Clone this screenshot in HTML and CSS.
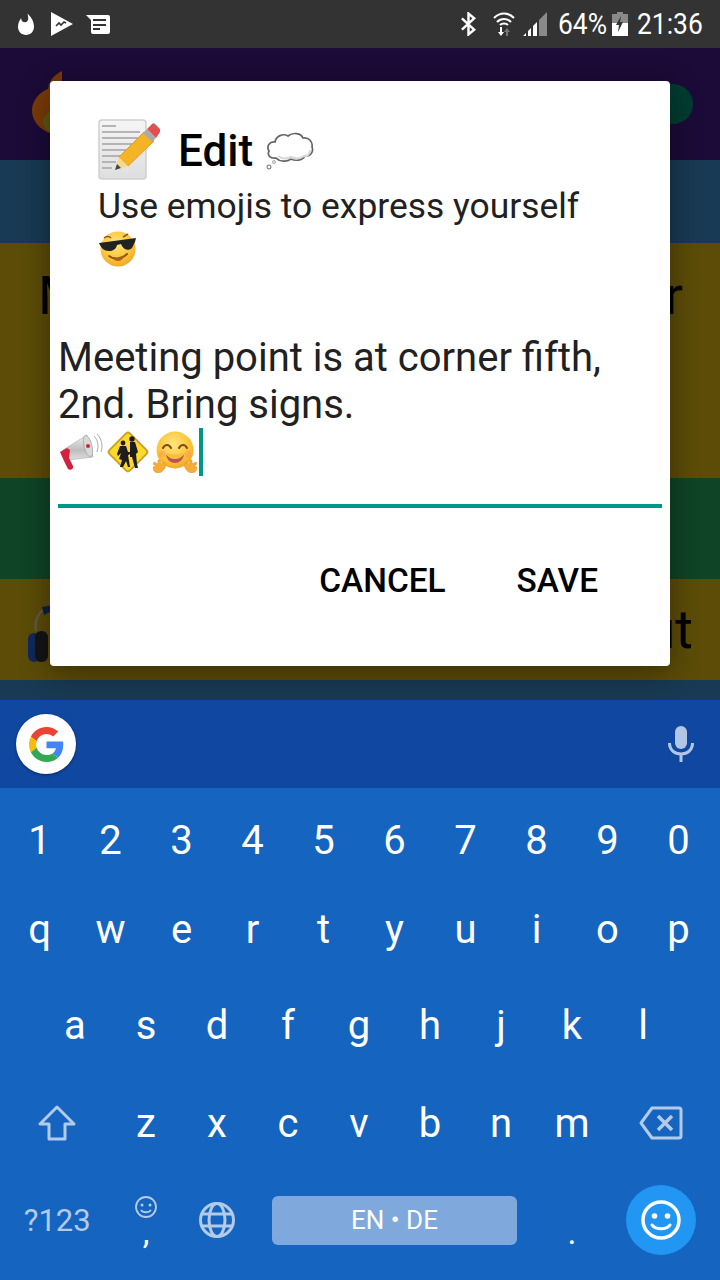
FILE: index.html
```html
<!DOCTYPE html>
<html lang="en">

<head>
    <meta charset="UTF-8">
    <title>Edit</title>
    <meta name="viewport" content="width=device-width, initial-scale=1.0">
    <link rel="stylesheet" href="styles.css">
</head>

<body>

    <div class="statusbar">
        <div class="status-left">
            <svg class="st-flame" viewBox="4 0 16 22"><path fill="#fff" d="M13.500.67s.74 2.650.74 4.800c0 2.060-1.350 3.730-3.410 3.730-2.070 0-3.630-1.670-3.630-3.730l.03-.36C5.210 7.510 4 10.620 4 14c0 4.420 3.580 8 8 8s8-3.580 8-8C20 8.610 17.410 3.800 13.500.67z"/></svg>
            <svg class="st-play" viewBox="0 0 22 24"><path fill="#fff" d="M0 0L22 12 0 24z"/><path fill="none" stroke="#333" stroke-width="1.600" d="M5 14l3-3 2 2 3-3 2 1"/></svg>
            <svg class="st-news" viewBox="0 0 24 20"><path fill="#fff" d="M0 1h22a2 2 0 0 1 2 2v15a2 2 0 0 1-2 2H7a2 2 0 0 1-2-2V6z"/><path fill="none" stroke="#333" stroke-width="2" d="M7 6h13M7 11h13M7 15h7"/></svg>
        </div>
        <div class="status-right">
            <svg class="st-bt" viewBox="0 0 18 24"><path fill="none" stroke="#fff" stroke-width="2.600" d="M2 6l13 12-6 5V1l6 5L2 18"/></svg>
            <svg class="st-wifi" viewBox="0 0 22 24"><g fill="none" stroke="#fff" stroke-width="2"><path d="M1 6c6-6 14-6 20 0"/><path d="M4 10c4-4 10-4 14 0"/><path d="M7 13c2-2 6-2 8 0"/></g><path fill="#fff" d="M7 15h2v5h2l-3 4-3-4h2z"/><path fill="#777" d="M14 16l3 4h-2v4h-2v-4h-2z"/></svg>
            <svg class="st-signal" viewBox="0 0 24 24"><path fill="#fff" d="M0 24l3-3v3zM5 24v-5l3-3v8zM10 24V14l4-4v14z"/><path fill="#8a8a8a" d="M16 24V8l8-8v24z"/></svg>
            <span class="st-text st-pct"><span>64%</span></span>
            <svg class="st-batt" viewBox="0 0 16 24"><path fill="#8a8a8a" d="M5 0h6v2h5v9H0V2h5z"/><path fill="#fff" d="M0 11h16v13H0z"/><path fill="#333" d="M9 4L4 13h3l-1 7 5-10H8z"/></svg>
            <span class="st-text st-time"><span>21:36</span></span>
        </div>
    </div>

    <div class="app">
        <div class="band band-head">
            <svg class="bg-flame" viewBox="0 0 32 66"><path fill="#7a3b07" d="M32 1C24 5 19 11 18 19 10 22 2 30 2 40c0 14 12 24 30 26z"/><path fill="#5c5a14" d="M32 38c-10 1-19 6-19 14 0 7 9 13 19 14z"/></svg>
            <div class="bg-fab"></div>
        </div>
        <div class="band band-blue"></div>
        <div class="band band-yellow band-tall"><span>M</span><span>r</span></div>
        <div class="band band-green"></div>
        <div class="band band-yellow band-last">
            <svg class="bg-phones" viewBox="0 0 24 58"><path fill="none" stroke="#5d5a48" stroke-width="2.500" d="M8 26C6 14 10 6 24 0"/><path fill="#0e1f44" d="M14 2l10-2v6l-8 4z"/><rect x="0" y="28" width="12" height="29" rx="6" fill="#10285c"/><rect x="7" y="26" width="13" height="31" rx="6" fill="#141414"/></svg>
            <span>ut</span>
        </div>
        <div class="band band-foot"></div>
    </div>

    <div class="dialog">
        <div class="dialog-title">
            <svg class="em-memo" viewBox="0 0 62 62">
                <defs>
                    <linearGradient id="paper" x1="0" y1="0" x2="0" y2="1"><stop offset="0" stop-color="#f5f5f5"/><stop offset="1" stop-color="#dedede"/></linearGradient>
                </defs>
                <rect x="1" y="1" width="47" height="59" rx="3" fill="url(#paper)" stroke="#cfcfcf" stroke-width="1.500"/>
                <path stroke="#b4b4b4" stroke-width="2" d="M4 7h14M4 13h38M4 19h38M4 25h30M4 31h24M4 37h20M4 43h14M4 49h10"/>
                <path fill="#f5b428" stroke="#e09b14" d="M46 13l10 9-26 25-9-9z"/>
                <path fill="#f6d98a" d="M21 38l9 9-13 4z"/>
                <path fill="#444" d="M19 45l4 4-6 2z"/>
                <path fill="#aaa" d="M45 14l4-4 9 9-4 4z"/>
                <path fill="#e0504f" d="M49 10l5-5c1-1 2-1 3 0l5 5c1 1 1 2 0 3l-4 6z"/>
            </svg>
            <span class="title-text">Edit</span>
            <svg class="em-bubble" viewBox="0 0 48 40">
                <path fill="#fff" stroke="#666" stroke-width="1.700" d="M10 27C4 28 1 24 3 20 0 15 4 10 9 11 10 5 17 2 22 5 27 1 35 2 37 7 43 6 47 11 46 16 48 21 44 26 39 25 36 30 29 30 25 28 21 31 14 31 10 27z"/>
                <path fill="none" stroke="#d8d8d8" stroke-width="2" d="M12 25c4 3 9 3 13 1 4 2 9 2 13-1 3 1 6-2 6-6"/>
                <circle cx="3" cy="36" r="2" fill="#fff" stroke="#666"/>
                <circle cx="8" cy="31" r="1.500" fill="#eee" stroke="#888" stroke-width=".7"/>
            </svg>
        </div>
        <div class="dialog-sub">Use emojis to express yourself</div>
        <svg class="em-cool" viewBox="0 0 38 38">
            <defs>
                <radialGradient id="face" cx=".45" cy=".35" r=".75"><stop offset="0" stop-color="#ffe680"/><stop offset=".6" stop-color="#fbc436"/><stop offset="1" stop-color="#ec9a22"/></radialGradient>
            </defs>
            <circle cx="19" cy="19" r="17.500" fill="url(#face)"/>
            <path fill="#222" d="M0 13l37-5-1 4-3 6c-3 3-8 2-10-2l-1-2-4 1c-1 4-4 6-8 6-5 0-8-3-10-8z"/>
            <path fill="none" stroke="#8a5a12" stroke-width="1.500" d="M5 8c2-2 5-2 7 0M24 7l5-3"/>
            <path fill="none" stroke="#8a4a12" stroke-width="1.800" stroke-linecap="round" d="M10 26c5 4 13 3 18-2"/>
            <path fill="#a8641c" d="M12 27c4 2 9 2 14-2-2 4-4 6-7 6-3 0-5-2-7-4z"/>
        </svg>

        <div class="dialog-input">
            <div>Meeting point is at corner fifth,<br>2nd. Bring signs.</div>
            <div class="emoji-line">
                <svg class="em-mega" viewBox="0 0 44 38">
                    <defs>
                        <linearGradient id="metal" x1="0" y1="0" x2="0" y2="1"><stop offset="0" stop-color="#f2f2f2"/><stop offset=".6" stop-color="#bdbdbd"/><stop offset="1" stop-color="#e0e0e0"/></linearGradient>
                    </defs>
                    <path fill="url(#metal)" stroke="#aaa" stroke-width=".6" d="M4 17L28 2l6 22-25 3c-3-1-6-6-5-10z"/>
                    <path fill="#d32240" d="M1 19l7-4 3 2-1 8 4 8c1 3-3 5-5 3L5 28z"/>
                    <ellipse cx="29" cy="13" rx="4" ry="11" fill="#d8d8d8" stroke="#999" stroke-width=".6" transform="rotate(-14 29 13)"/>
                    <circle cx="29" cy="13" r="2" fill="#d32240"/>
                    <path fill="none" stroke="#aaa" d="M35 3c4 4 5 10 3 16M38 1c5 5 6 12 4 18"/>
                </svg>
                <svg class="em-sign" viewBox="0 0 44 44">
                    <rect x="7.500" y="7.500" width="29" height="29" rx="3" fill="#fcd92a" stroke="#c8a024" stroke-width="1.800" transform="rotate(45 22 22)"/>
                    <g fill="#1d1d1d">
                        <circle cx="17" cy="13" r="2.400"/>
                        <path d="M14 16h6l2 6 3 0-2 3-1 0 1 6 1 6h-2l-2-6-3 6h-3l2-7-3-1 2-6-3 3-1-2z"/>
                        <circle cx="26" cy="9" r="2.700"/>
                        <path d="M22 12h7l3 10-2 2 1 10 1 4h-3l-3-11-2 0 0-15z"/>
                    </g>
                </svg>
                <svg class="em-hug" viewBox="0 0 44 42">
                    <circle cx="22" cy="19" r="18.500" fill="url(#face)"/>
                    <path fill="none" stroke="#7a4a12" stroke-width="2" stroke-linecap="round" d="M10 17c2-4 6-4 8 0M26 17c2-4 6-4 8 0"/>
                    <path fill="#c0505a" d="M13 24c6 2 12 2 18 0-1 5-5 8-9 8s-8-3-9-8z"/>
                    <path fill="#f5c03a" d="M13 22c6 2 12 2 18 0-1 4-5 6-9 6s-8-2-9-6z"/>
                    <circle cx="9" cy="23" r="3.500" fill="#f59b58" opacity=".5"/>
                    <circle cx="35" cy="23" r="3.500" fill="#f59b58" opacity=".5"/>
                    <path fill="#f6ad37" stroke="#e08e2a" stroke-width=".5" d="M0 36l3-1-3-2 1-2 4 2 0-4h2l1 4 3-2 2 3c-1 4-4 8-8 8-3 0-5-3-5-6zM44 36l-3-1 3-2-1-2-4 2 0-4h-2l-1 4-3-2-2 3c1 4 4 8 8 8 3 0 5-3 5-6z"/>
                </svg>
                <span class="cursor"></span>
            </div>
        </div>

        <div class="dialog-actions">
            <span>CANCEL</span>
            <span>SAVE</span>
        </div>
    </div>

    <div class="keyboard">
        <div class="kb-top">
            <div class="g-btn">
                <svg class="g-logo" viewBox="0 0 48 48">
                    <path fill="#EA4335" d="M24 9.500c3.540 0 6.710 1.220 9.210 3.600l6.850-6.850C35.900 2.380 30.470 0 24 0 14.620 0 6.510 5.380 2.560 13.220l7.980 6.190C12.430 13.720 17.740 9.500 24 9.500z"/>
                    <path fill="#4285F4" d="M46.980 24.550c0-1.570-.15-3.090-.38-4.550H24v9.020h12.940c-.58 2.960-2.260 5.480-4.780 7.180l7.730 6c4.510-4.180 7.090-10.360 7.090-17.650z"/>
                    <path fill="#FBBC05" d="M10.530 28.590c-.48-1.450-.76-2.990-.76-4.590s.27-3.140.76-4.590l-7.980-6.190C.92 16.460 0 20.120 0 24c0 3.880.92 7.540 2.560 10.780l7.970-6.190z"/>
                    <path fill="#34A853" d="M24 48c6.480 0 11.930-2.130 15.890-5.810l-7.730-6c-2.150 1.450-4.920 2.300-8.160 2.300-6.260 0-11.570-4.220-13.470-9.910l-7.980 6.190C6.510 42.620 14.620 48 24 48z"/>
                </svg>
            </div>
            <svg class="mic" viewBox="0 0 26 36"><rect x="7" y="0" width="12" height="23" rx="6" fill="#b3c6e6"/><path fill="none" stroke="#b3c6e6" stroke-width="3" d="M1.500 17c0 7 5 11 11.500 11s11.500-4 11.500-11M13 28v8"/></svg>
        </div>
        <div class="kb-keys">
            <div class="kb-row">
                <span class="key">1</span><span class="key">2</span><span class="key">3</span><span class="key">4</span><span class="key">5</span><span class="key">6</span><span class="key">7</span><span class="key">8</span><span class="key">9</span><span class="key">0</span>
            </div>
            <div class="kb-row">
                <span class="key">q</span><span class="key">w</span><span class="key">e</span><span class="key">r</span><span class="key">t</span><span class="key">y</span><span class="key">u</span><span class="key">i</span><span class="key">o</span><span class="key">p</span>
            </div>
            <div class="kb-row">
                <span class="key start-3">a</span><span class="key">s</span><span class="key">d</span><span class="key">f</span><span class="key">g</span><span class="key">h</span><span class="key">j</span><span class="key">k</span><span class="key">l</span>
            </div>
            <div class="kb-row">
                <span class="key wide">
                    <svg class="ic-shift" viewBox="0 0 38 36"><path fill="none" stroke="#b3cbe9" stroke-width="3" stroke-linejoin="round" d="M19 2L2 19h9v15h16V19h9z"/></svg>
                </span>
                <span class="key">z</span><span class="key">x</span><span class="key">c</span><span class="key">v</span><span class="key">b</span><span class="key">n</span><span class="key">m</span>
                <span class="key wide">
                    <svg class="ic-del" viewBox="0 0 44 34"><path fill="none" stroke="#b3cbe9" stroke-width="3" stroke-linejoin="round" d="M13 2h27a2 2 0 0 1 2 2v26a2 2 0 0 1-2 2H13L2 17z"/><path stroke="#b3cbe9" stroke-width="3.500" d="M19 10l14 14M33 10L19 24"/></svg>
                </span>
            </div>
            <div class="kb-row">
                <span class="key wide fn-text">?123</span>
                <span class="key comma">
                    <svg class="ic-smile-sm" viewBox="0 0 24 24"><circle cx="12" cy="12" r="10" fill="none" stroke="#b3cbe9" stroke-width="1.800"/><circle cx="8" cy="10" r="1.500" fill="#b3cbe9"/><circle cx="16" cy="10" r="1.500" fill="#b3cbe9"/><path fill="none" stroke="#b3cbe9" stroke-width="1.800" d="M7 15c2 3 8 3 10 0"/></svg>
                    <span class="comma-mark">,</span>
                </span>
                <span class="key">
                    <svg class="ic-globe" viewBox="0 0 36 36"><g fill="none" stroke="#b3cbe9" stroke-width="3"><circle cx="18" cy="18" r="16.500"/><ellipse cx="18" cy="18" rx="8" ry="16.500"/><path d="M3 12h30M3 24h30"/></g></svg>
                </span>
                <span class="key space-key"><span class="space-bar">EN • DE</span></span>
                <span class="key dot">.</span>
                <span class="key wide">
                    <span class="emoji-btn">
                        <svg class="ic-smile" viewBox="0 0 40 40"><circle cx="20" cy="20" r="18" fill="none" stroke="#fff" stroke-width="3.500"/><circle cx="13.500" cy="16" r="2.800" fill="#fff"/><circle cx="26.500" cy="16" r="2.800" fill="#fff"/><path fill="none" stroke="#fff" stroke-width="3" stroke-linecap="round" d="M11 25c4 5 14 5 18 0"/></svg>
                    </span>
                </span>
            </div>
        </div>
    </div>

</body>

</html>
```

FILE: styles.css
```css
* {
    box-sizing: border-box;
}

body {
    margin: 0;
    width: 720px;
    height: 1280px;
    overflow: hidden;
    position: relative;
    font-family: Roboto, "Noto Sans", sans-serif;
    background: #1565c0;
}

svg {
    display: block;
}

/* status bar */
.statusbar {
    height: 48px;
    background: #333;
    display: flex;
    justify-content: space-between;
    align-items: center;
    padding: 0 17px 0 18px;
}

.status-left,
.status-right {
    display: flex;
    align-items: center;
}

.st-flame {
    width: 16px;
    height: 22px;
    margin-right: 17px;
}

.st-play {
    width: 22px;
    height: 24px;
    margin-right: 13px;
}

.st-news {
    width: 24px;
    height: 20px;
}

.st-bt {
    width: 17px;
    height: 24px;
    margin-right: 16px;
}

.st-wifi {
    width: 22px;
    height: 24px;
    margin-right: 8px;
}

.st-signal {
    width: 24px;
    height: 24px;
    margin-right: 11px;
}

.st-batt {
    width: 16px;
    height: 24px;
    margin: 0 9px 0 7px;
}

/* the status digits are narrower than Roboto's */
.st-text {
    color: #fff;
    font-size: 30px;
    line-height: 48px;
    white-space: nowrap;
}

.st-text span {
    display: inline-block;
    transform: scaleX(0.88);
    transform-origin: left center;
}

.st-pct {
    width: 47px;
}

.st-time {
    width: 66px;
}

/* dimmed app behind the dialog */
.app {
    height: 652px;
    display: flex;
    flex-direction: column;
}

.band {
    position: relative;
    display: flex;
    justify-content: space-between;
    align-items: center;
    color: #000;
    font-size: 54px;
}

.band-head {
    height: 112px;
    background: #1c0a38;
}

.band-blue {
    height: 83px;
    background: #183a54;
}

.band-yellow {
    background: #5c4c08;
    padding: 0 27px 0 38px;
}

.band-tall {
    height: 235px;
    align-items: flex-start;
    padding-top: 21px;
    padding-right: 37px;
}

.band-green {
    height: 101px;
    background: #0f4426;
}

.band-last {
    height: 101px;
    padding-left: 28px;
}

.band-foot {
    height: 20px;
    background: #183a54;
}

.bg-flame {
    position: absolute;
    left: 30px;
    top: 22px;
    width: 32px;
    height: 66px;
}

.bg-fab {
    position: absolute;
    left: 613px;
    top: 36px;
    width: 80px;
    height: 40px;
    border-radius: 20px;
    background: #003c30;
}

.bg-phones {
    width: 24px;
    height: 58px;
    margin-top: 8px;
}

/* dialog */
.dialog {
    position: absolute;
    left: 50px;
    top: 81px;
    width: 620px;
    height: 585px;
    background: #fff;
    border-radius: 4px;
    box-shadow: 0 6px 30px rgba(0, 0, 0, 0.4);
    padding: 38px 8px 0;
}

.dialog-title {
    display: flex;
    align-items: center;
    padding-left: 40px;
    height: 62px;
}

.em-memo {
    width: 62px;
    height: 62px;
    margin-right: 18px;
}

.title-text {
    font-size: 44px;
    line-height: 52px;
    margin-top: 2px;
    font-weight: 500;
    color: #000;
}

.em-bubble {
    width: 48px;
    height: 40px;
    margin: 2px 0 0 13px;
}

.dialog-sub {
    padding-left: 40px;
    margin-top: 3px;
    font-size: 35.4px;
    line-height: 44px;
    color: #212121;
}

.em-cool {
    width: 38px;
    height: 38px;
    margin: 2px 0 0 41px;
}

.dialog-input {
    margin-top: 66px;
    height: 174px;
    border-bottom: 4px solid #009688;
    font-size: 40px;
    line-height: 47px;
    color: #212121;
}

.emoji-line {
    display: flex;
    align-items: center;
    gap: 3px;
    height: 47px;
    padding-left: 1px;
}

.em-mega {
    width: 44px;
    height: 38px;
}

.em-sign {
    width: 44px;
    height: 44px;
}

.em-hug {
    width: 44px;
    height: 42px;
}

.cursor {
    width: 4px;
    height: 48px;
    margin-left: -1px;
    background: #009688;
}

.dialog-actions {
    display: flex;
    justify-content: flex-end;
    gap: 71px;
    padding: 53px 64px 0 0;
    font-size: 33.4px;
    line-height: 40px;
    font-weight: 500;
    color: #000;
}

/* keyboard */
.keyboard {
    position: relative;
    height: 580px;
    background: #1565c0;
    color: #fff;
}

.kb-top {
    height: 88px;
    background: #0f47a1;
    display: flex;
    justify-content: space-between;
    align-items: center;
    padding: 0 26px 0 16px;
}

.g-btn {
    width: 60px;
    height: 60px;
    border-radius: 50%;
    background: #fff;
    display: flex;
    align-items: center;
    justify-content: center;
    box-shadow: 0 1px 3px rgba(0, 0, 0, 0.4);
}

.g-logo {
    width: 35px;
    height: 35px;
}

.mic {
    width: 26px;
    height: 36px;
}

.kb-keys {
    padding: 8px 0 0 4px;
    display: grid;
    grid-template-rows: 88px 90px 102px 94px 100px;
}

.kb-row {
    display: grid;
    grid-template-columns: repeat(20, 35.5px);
    align-items: center;
    font-size: 40px;
}

.key {
    grid-column: span 2;
    display: flex;
    align-items: center;
    justify-content: center;
}

.start-3 {
    grid-column: 2 / span 2;
}

.wide {
    grid-column: span 3;
}

.space-key {
    grid-column: span 8;
}

.space-bar {
    width: 245px;
    height: 49px;
    border-radius: 6px;
    background: #7fa9dc;
    font-size: 26px;
    line-height: 49px;
    text-align: center;
}

.fn-text {
    font-size: 31px;
    color: #b3cbe9;
}

.comma {
    flex-direction: column;
}

.comma-mark {
    font-size: 34px;
    line-height: 26px;
    height: 26px;
}

.dot {
    font-size: 34px;
    padding-top: 24px;
}

.ic-shift {
    width: 38px;
    height: 36px;
}

.ic-del {
    width: 44px;
    height: 34px;
}

.ic-globe {
    width: 36px;
    height: 36px;
}

.ic-smile-sm {
    width: 24px;
    height: 24px;
}

.emoji-btn {
    width: 70px;
    height: 70px;
    border-radius: 50%;
    background: #2196f3;
    display: flex;
    align-items: center;
    justify-content: center;
}

.ic-smile {
    width: 40px;
    height: 40px;
}
```
